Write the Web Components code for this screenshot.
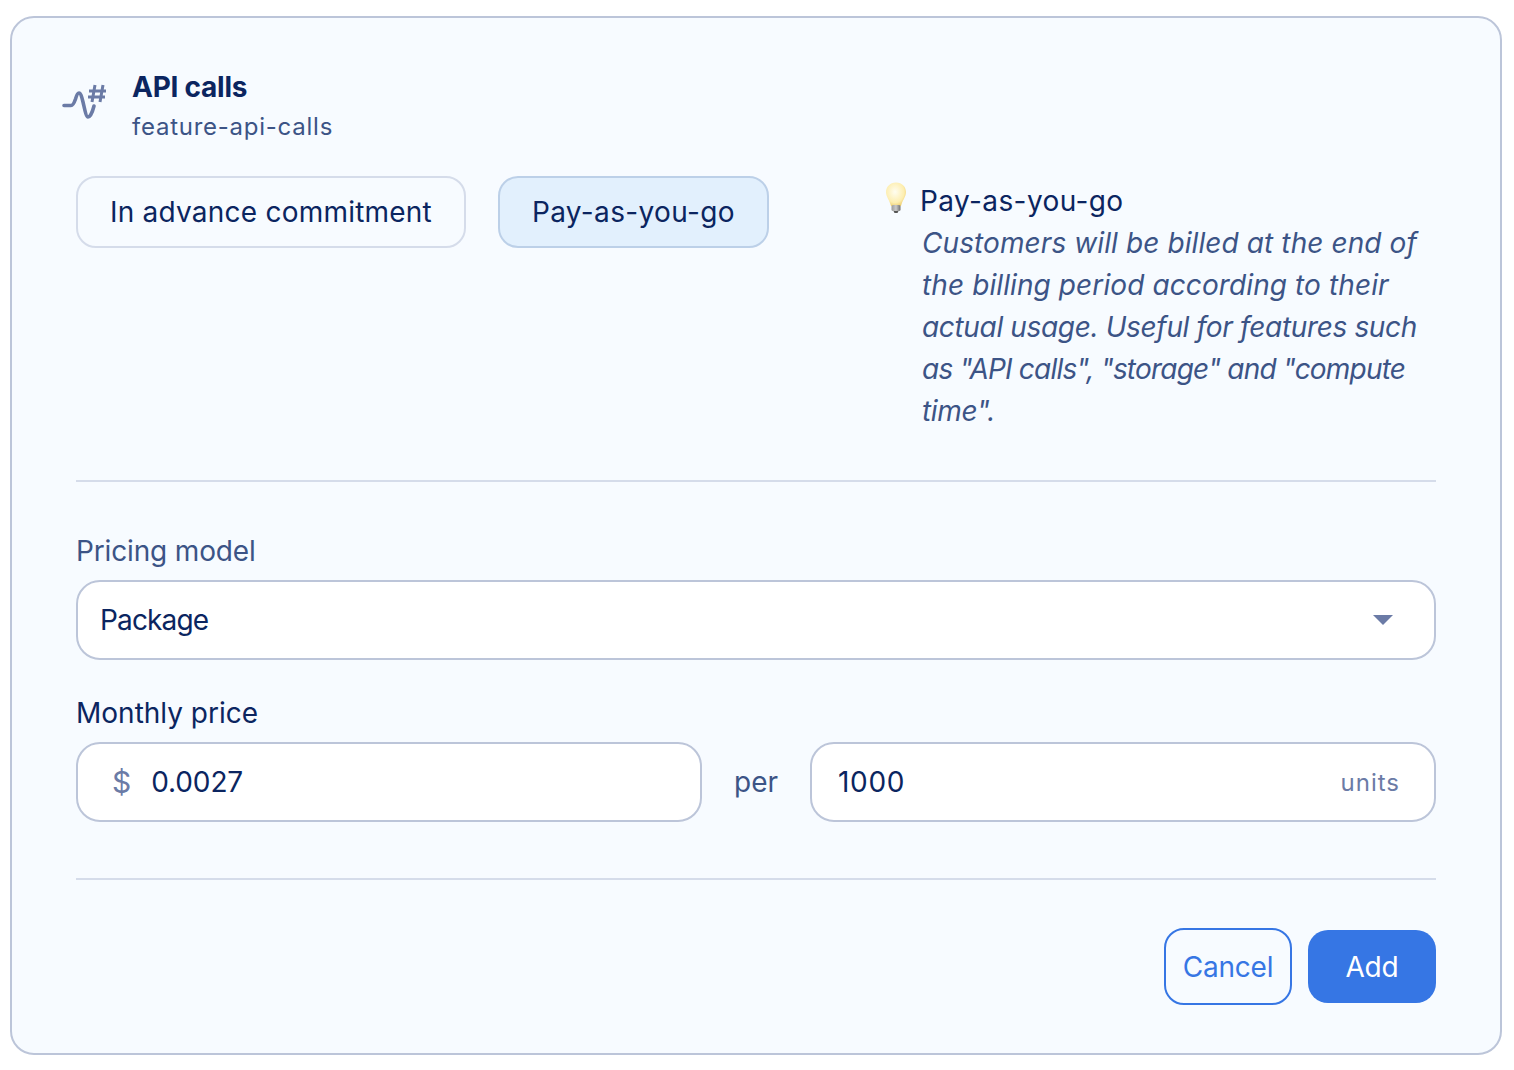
<!DOCTYPE html>
<html>
<head>
<meta charset="utf-8">
<title>API calls</title>
<style>
  html, body { margin: 0; background: #fff; }
  body { font-family: Inter, "Noto Sans", sans-serif; color: #0b2560; }
  .tight { letter-spacing: -.35px; }
  .tighter { letter-spacing: -.8px; }
</style>
</head>
<body>
<template id="feature-card-tpl">
  <style>
    :host { display: block; box-sizing: border-box; width: 1492px; height: 1039px; margin: 16px 0 0 10px;
      background: #f7fbff; border: 2px solid #bcc5d9; border-radius: 24px; padding: 52px 64px 0; }
    hr { border: 0; height: 2px; background: #d5dcea; margin: 0; }
    .top { display: flex; justify-content: space-between; margin-top: 36px; }
    .segments { display: flex; gap: 32px; align-items: flex-start; }
    .fields { padding-top: 50px; }
    .price { display: grid; grid-template-columns: 1fr 44px 1fr; align-items: center; gap: 32px; }
    .actions { display: flex; justify-content: flex-end; align-items: center; gap: 16px; margin-top: 48px; }
    .second { margin-top: 34px; }
  </style>
  <slot name="header"></slot>
  <div class="top">
    <div class="segments"><slot name="segments"></slot></div>
    <slot name="hint"></slot>
  </div>
  <hr style="margin-top:48px">
  <div class="fields">
    <slot name="model"></slot>
    <div class="second"><slot name="price-label"></slot></div>
    <div class="price"><slot name="price"></slot></div>
  </div>
  <hr style="margin-top:56px">
  <div class="actions"><slot name="actions"></slot></div>
</template>

<template id="feature-header-tpl">
  <style>
    :host { display: flex; margin-left: -14px; height: 70px; }
    svg { width: 46px; height: 40px; margin-top: 12px; flex: none; }
    .txt { margin-left: 24px; }
    .name { font-size: 28px; font-weight: 700; line-height: 34px; letter-spacing: -.25px; }
    .code { font-size: 24px; line-height: 32px; color: #3c5486; margin-top: 7px; letter-spacing: .75px; }
  </style>
  <svg viewBox="0 0 46 40" fill="none" stroke="#6b7ba6" stroke-width="3.600" stroke-linecap="round" stroke-linejoin="round">
    <path d="M2 23.500H9C11 23.500 12.500 20 13.500 17C14.500 13.500 15.500 11 17 11C18.500 11 19.500 14 21 20C22.500 26 24 35 26 35C28 35 30.500 30 32 24"/>
    <path stroke-width="3" stroke-linecap="butt" d="M33 3L30 20M41 3L38 20M27 9H44M26 15H43"/>
  </svg>
  <div class="txt">
    <div class="name"><slot name="name"></slot></div>
    <div class="code"><slot name="code"></slot></div>
  </div>
</template>

<template id="segment-btn-tpl">
  <style>
    :host { display: flex; align-items: center; justify-content: center; box-sizing: border-box; height: 72px;
      padding: 0 32px; border: 2px solid #d5dcea; border-radius: 20px; font-size: 28px; letter-spacing: .22px; white-space: nowrap; }
    :host([selected]) { background: #e2f0fd; border-color: #bcd0e8; letter-spacing: .35px; }
  </style>
  <slot></slot>
</template>

<template id="hint-box-tpl">
  <style>
    :host { display: flex; width: 552px; box-sizing: border-box; }
    svg { width: 24px; height: 32px; flex: none; margin-top: 6px; }
    .body { margin-left: 12px; margin-top: 4px; }
    .title { font-size: 28px; line-height: 42px; letter-spacing: .4px; }
    .desc { font-size: 28px; line-height: 42px; font-style: italic; color: #3c5486; margin-left: 2px; letter-spacing: .1px; }
  </style>
  <svg viewBox="0 0 24 32">
    <defs>
      <radialGradient id="b" cx=".45" cy=".4" r=".65"><stop offset="0" stop-color="#fffdf0"/><stop offset=".7" stop-color="#fdeeb0"/><stop offset="1" stop-color="#eccb6c"/></radialGradient>
      <linearGradient id="s" x1="0" x2="1"><stop offset="0" stop-color="#9a9a9a"/><stop offset=".5" stop-color="#c9c9c9"/><stop offset="1" stop-color="#6f6f6f"/></linearGradient>
    </defs>
    <path fill="url(#b)" d="M12 .5C5.800.5 2 5 2 10c0 5 3.600 8 5 14h10c1.400-6 5-9 5-14C22 5 18.200.5 12 .5Z"/>
    <rect x="7.500" y="23" width="9" height="6" rx="1.500" fill="url(#s)"/>
    <path fill="#555" d="M9.500 29h5l-1 2h-3Z"/>
  </svg>
  <div class="body">
    <div class="title"><slot name="title"></slot></div>
    <div class="desc"><slot></slot></div>
  </div>
</template>

<template id="field-label-tpl">
  <style>
    :host { display: block; font-size: 28px; line-height: 36px; padding-top: 1px; margin-bottom: 11px; letter-spacing: -.15px; color: #3c5486; }
    :host([strong]) { color: #0b2560; letter-spacing: 0; }
  </style>
  <slot></slot>
</template>

<template id="text-box-tpl">
  <style>
    :host { display: flex; align-items: center; box-sizing: border-box; height: 80px; background: #fff;
      border: 2px solid #bcc5d9; border-radius: 24px; padding: 0 34px 0 22px; font-size: 28px; letter-spacing: -.1px; }
    :host([select]) { letter-spacing: -.85px; }
    :host([wide]) { padding-left: 26px; letter-spacing: .7px; }
    .val { flex: 1; }
    ::slotted([slot="pre"]) { color: #6b7ba6; margin: 0 20px 0 12px; font-size: 30px; }
    ::slotted([slot="post"]) { color: #6b7ba6; font-size: 24px; letter-spacing: 1px; }
    .caret { width: 0; height: 0; border-left: 10px solid transparent; border-right: 10px solid transparent; border-top: 10px solid #6b7ba6; margin-right: 7px; display: none; }
    :host([select]) .caret { display: block; }
  </style>
  <slot name="pre"></slot>
  <div class="val"><slot></slot></div>
  <slot name="post"></slot>
  <div class="caret"></div>
</template>

<template id="action-btn-tpl">
  <style>
    :host { display: flex; align-items: center; justify-content: center; box-sizing: border-box; width: 128px; height: 73px;
      border-radius: 20px; background: #3676e4; color: #fff; font-size: 28px; letter-spacing: -.2px; }
    :host([outline]) { height: 77px; background: transparent; color: #3676e4; border: 2px solid #3676e4; }
  </style>
  <slot></slot>
</template>

<feature-card>
  <feature-header slot="header"><span slot="name">API calls</span><span slot="code">feature-api-calls</span></feature-header>
  <segment-btn slot="segments">In advance commitment</segment-btn>
  <segment-btn slot="segments" selected>Pay-as-you-go</segment-btn>
  <hint-box slot="hint"><span slot="title">Pay-as-you-go</span>Customers will be billed at the end of the billing period according to their <span class="tight">actual usage. Useful for features such</span> <span class="tighter">as "API calls", "storage" and "compute</span> <span class="tight">time".</span></hint-box>
  <div slot="model">
    <field-label>Pricing model</field-label>
    <text-box select>Package</text-box>
  </div>
  <field-label slot="price-label" strong>Monthly price</field-label>
  <text-box slot="price"><span slot="pre">$</span>0.0027</text-box>
  <span slot="price" style="font-size:28px;color:#3c5486;white-space:nowrap">per</span>
  <text-box slot="price" wide>1000<span slot="post">units</span></text-box>
  <action-btn slot="actions" outline>Cancel</action-btn>
  <action-btn slot="actions">Add</action-btn>
</feature-card>

<script>
  class ShadowTpl extends HTMLElement {
    constructor() {
      super();
      const tpl = document.getElementById(this.constructor.tpl);
      this.attachShadow({ mode: 'open' }).appendChild(tpl.content.cloneNode(true));
    }
  }
  const define = (name, tplId) => {
    customElements.define(name, class extends ShadowTpl { static tpl = tplId; });
  };
  define('feature-card', 'feature-card-tpl');
  define('feature-header', 'feature-header-tpl');
  define('segment-btn', 'segment-btn-tpl');
  define('hint-box', 'hint-box-tpl');
  define('field-label', 'field-label-tpl');
  define('text-box', 'text-box-tpl');
  define('action-btn', 'action-btn-tpl');
</script>
</body>
</html>
